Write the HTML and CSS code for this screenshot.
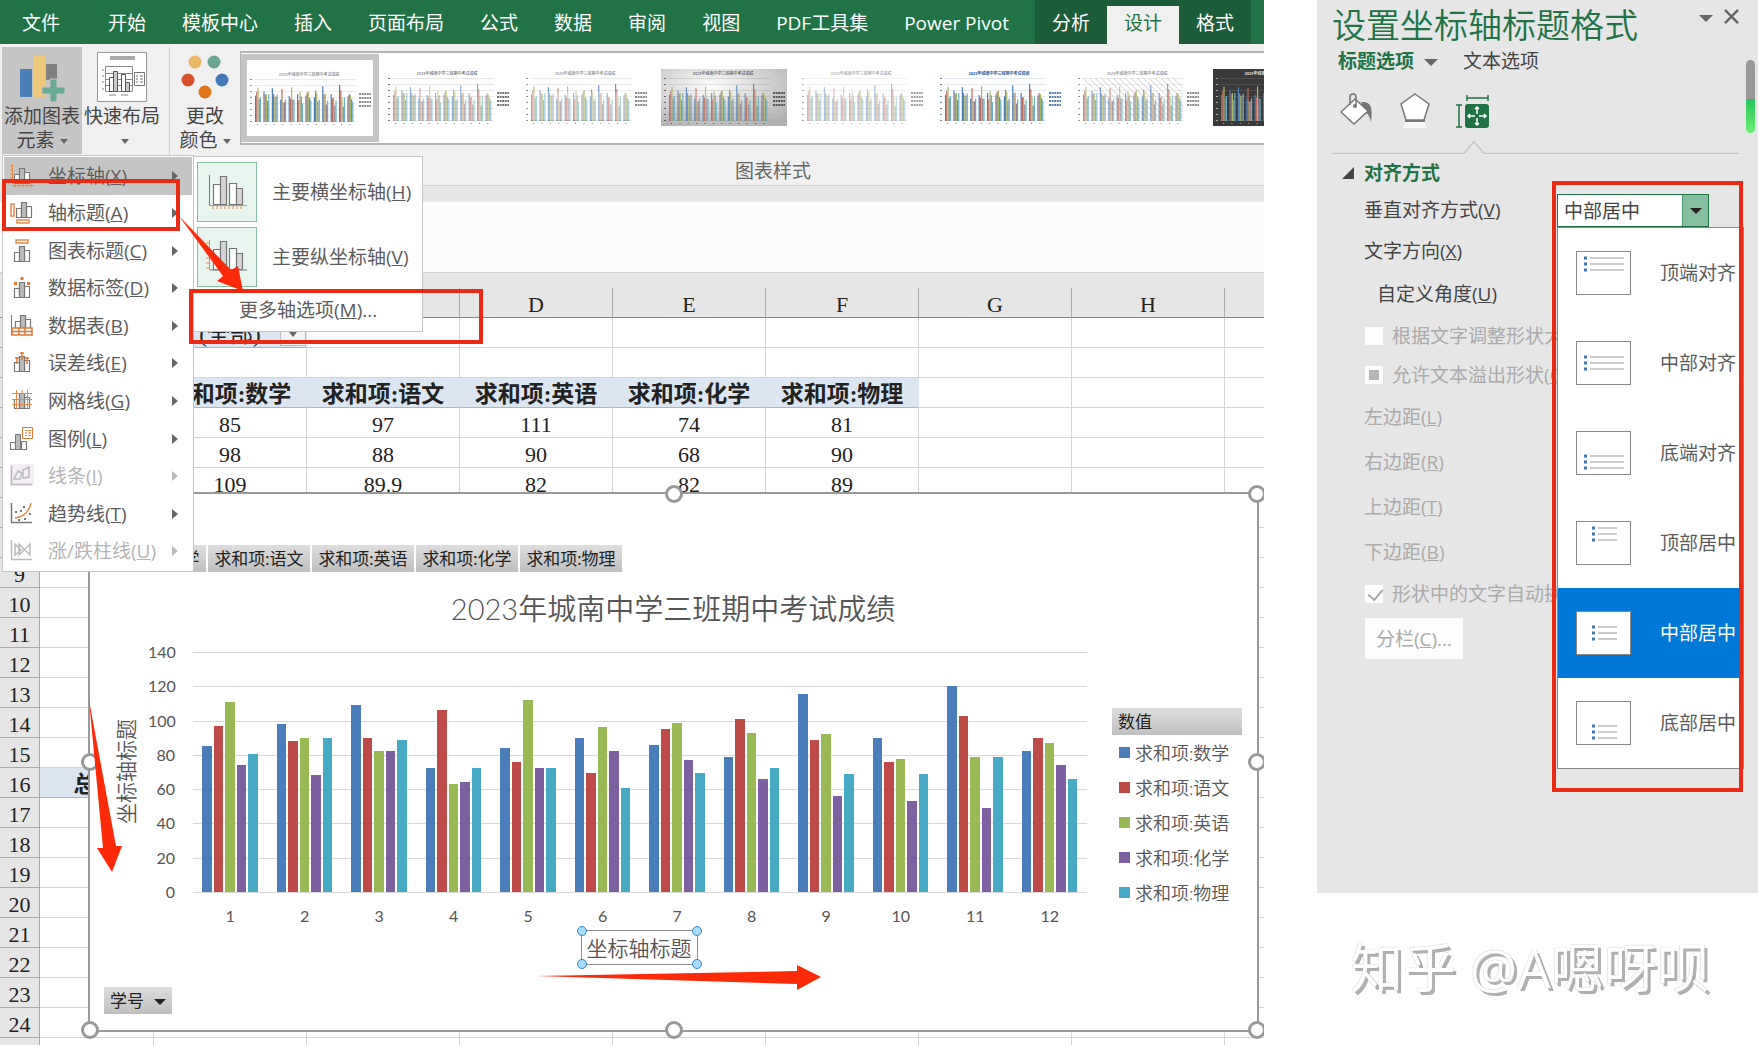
FILE: index.html
```
<!DOCTYPE html>
<html lang="zh-CN">
  <head>
    <meta charset="UTF-8" />
    <meta name="viewport" content="width=device-width, initial-scale=1.0" />
    <title>设置坐标轴标题格式</title>
    <link rel="stylesheet" href="styles.css">
  </head>
  <body>
    <!-- shared icon parts -->
    <svg class="defs">
      <symbol id="bars" viewBox="0 0 24 24">
        <g stroke="#777" stroke-width="1.2">
          <path fill="#fff" d="M4.5 10.5h5v9h-5zM14.5 8.5h5v11h-5z" />
          <path fill="#bbb" d="M9.500 4.500h5v15h-5z" />
        </g>
      </symbol>
      <symbol id="bigbars" viewBox="0 0 42 42">
        <g stroke="#777" stroke-width="1.200">
          <path fill="#fff" d="M7.500 13.500h7v20h-7zM23.500 12.500h7v21h-7z" />
          <path fill="#d5d5d5" d="M14.500 5.500h6v28h-6zM30.500 17.500h6v16h-6z" />
        </g>
      </symbol>
      <symbol id="lines-wide" viewBox="0 0 40 16">
        <path d="M6 2h34M6 8h34M6 14h34" stroke="#999" />
        <path d="M0 .5h3v3H0zM0 6.500h3v3H0zM0 12.500h3v3H0z" fill="#3f78b5" />
      </symbol>
      <symbol id="lines-short" viewBox="0 0 26 16">
        <path d="M7 2h19M7 8h19M7 14h19" stroke="#999" />
        <path d="M1 .5h3v3H1zM1 6.500h3v3H1zM1 12.500h3v3H1z" fill="#3f78b5" />
      </symbol>
    </svg>

    <main class="excel">
      <nav class="tabs">
        <button class="tab tab-file">文件</button>
        <button class="tab">开始</button>
        <button class="tab">模板中心</button>
        <button class="tab">插入</button>
        <button class="tab">页面布局</button>
        <button class="tab">公式</button>
        <button class="tab">数据</button>
        <button class="tab">审阅</button>
        <button class="tab">视图</button>
        <button class="tab">PDF工具集</button>
        <button class="tab">Power Pivot</button>
        <div class="context-tabs">
          <button class="tab">分析</button>
          <button class="tab active">设计</button>
          <button class="tab">格式</button>
        </div>
      </nav>

      <section class="ribbon">
        <button class="big-btn pressed">
          <svg class="big-icon" viewBox="0 0 50 50">
            <path fill="#4a7fb8" d="M3 17h12v28H3z" />
            <path fill="#f0c87c" d="M16 4h12v41H16z" />
            <path fill="#808080" d="M29 12h11v16H29z" />
            <path fill="#6aab94" stroke="#c5c5c5" d="M33 27h7v8h8v7h-8v8h-7v-8h-8v-7h8z" />
          </svg>
          <span>添加图表</span>
          <span>元素<i class="caret"></i></span>
        </button>
        <button class="big-btn">
          <svg class="big-icon" viewBox="0 0 50 50">
            <path fill="#fff" stroke="#999" d="M.5.5h49v49H.5z" />
            <path fill="#aaa" d="M13 4h25v4H13z" />
            <path fill="none" stroke="#888" d="M8.500 14.500h27v25h-27zM8 21.500h27M8 27.500h27M8 33.500h27M5 18h2M5 24h2M5 30h2M5 37h2M12 43h7M24 43h7" />
            <path fill="#fff" stroke="#555" d="M12.500 25.500h4v14h-4zM24.500 22.500h4v17h-4z" />
            <path fill="#ccc" stroke="#555" d="M16.500 19.500h4v20h-4zM28.500 30.500h4v9h-4z" />
            <path fill="#fff" stroke="#777" d="M37.500 20.500h10v13h-10z" />
            <path stroke="#777" d="M39 24h2M43 24h3M39 27h2M43 27h3M39 30h2M43 30h3" />
          </svg>
          <span>快速布局</span>
          <span><i class="caret"></i></span>
        </button>
        <button class="big-btn color-btn">
          <svg class="big-icon" viewBox="0 0 50 50">
            <circle cx="15" cy="10" r="6.500" fill="#e9b765" />
            <circle cx="34" cy="10" r="6.500" fill="#6aa68f" />
            <circle cx="8" cy="28" r="6.500" fill="#d8512f" />
            <circle cx="42" cy="28" r="6.500" fill="#4378b7" />
            <circle cx="25" cy="40" r="6.500" fill="#e0761b" />
          </svg>
          <span>更改</span>
          <span>颜色<i class="caret"></i></span>
        </button>
        <div class="styles-group">
          <div class="gallery" id="gallery"></div>
          <div class="group-label">图表样式</div>
        </div>
      </section>
      <div class="ribbon-edge"></div>
      <div class="formula-bar"></div>

      <section class="sheet">
        <div class="head-strip"></div>
        <table class="grid">
          <colgroup>
            <col class="col-num"><col class="col-a"><col><col><col><col><col><col><col><col>
          </colgroup>
          <thead>
            <tr><th></th><th>A</th><th>B</th><th>C</th><th>D</th><th>E</th><th>F</th><th>G</th><th>H</th><th></th></tr>
          </thead>
          <tbody id="rows">
            <tr><th>1</th><td></td><td class="pivot filter">(全部)<button class="filter-btn" aria-label="筛选"><i class="caret"></i></button></td><td></td><td></td><td></td><td></td><td></td><td></td><td></td></tr>
            <tr><th>2</th><td></td><td></td><td></td><td></td><td></td><td></td><td></td><td></td><td></td></tr>
            <tr><th>3</th><td class="pivot"></td><td class="pivot">求和项:数学</td><td class="pivot">求和项:语文</td><td class="pivot">求和项:英语</td><td class="pivot">求和项:化学</td><td class="pivot">求和项:物理</td><td></td><td></td><td></td></tr>
            <tr><th>4</th><td></td><td>85</td><td>97</td><td>111</td><td>74</td><td>81</td><td></td><td></td><td></td></tr>
            <tr><th>5</th><td></td><td>98</td><td>88</td><td>90</td><td>68</td><td>90</td><td></td><td></td><td></td></tr>
            <tr><th>6</th><td></td><td>109</td><td>89.9</td><td>82</td><td>82</td><td>89</td><td></td><td></td><td></td></tr>
          </tbody>
        </table>

        <div class="chart">
          <i class="handle top left"></i><i class="handle top mid"></i><i class="handle top right"></i>
          <i class="handle center left"></i><i class="handle center right"></i>
          <i class="handle bottom left"></i><i class="handle bottom mid"></i><i class="handle bottom right"></i>

          <div class="field-buttons">
            <button class="field-btn">求和项:数学</button>
            <button class="field-btn">求和项:语文</button>
            <button class="field-btn">求和项:英语</button>
            <button class="field-btn">求和项:化学</button>
            <button class="field-btn">求和项:物理</button>
          </div>
          <h2 class="chart-title">2023年城南中学三班期中考试成绩</h2>
          <div class="chart-body">
            <div class="y-title">坐标轴标题</div>
            <div class="y-axis">
              <span>140</span><span>120</span><span>100</span><span>80</span><span>60</span><span>40</span><span>20</span><span>0</span>
            </div>
            <div class="plot-col">
              <div class="plot" id="plot"></div>
              <div class="x-axis" id="x-axis"></div>
            </div>
            <div class="legend">
              <div class="legend-head">数值</div>
              <div class="legend-item"><i class="s0"></i>求和项:数学</div>
              <div class="legend-item"><i class="s1"></i>求和项:语文</div>
              <div class="legend-item"><i class="s2"></i>求和项:英语</div>
              <div class="legend-item"><i class="s3"></i>求和项:化学</div>
              <div class="legend-item"><i class="s4"></i>求和项:物理</div>
            </div>
          </div>
          <div class="x-title">坐标轴标题<i class="dot tl"></i><i class="dot tr"></i><i class="dot bl"></i><i class="dot br"></i></div>
          <button class="field-btn axis-btn">学号<i class="caret dark"></i></button>
        </div>
      </section>

      <!-- add chart element menu -->
      <div class="menu">
        <button class="menu-item hover">
          <svg viewBox="0 0 24 24"><use href="#bars" /><path fill="none" stroke="#e58a4a" d="M2.500 0v20M0 2h3M0 6h3M0 10h3M0 14h3M0 18h3M2 21.500h22M5 20v4M9 20v4M13 20v4M17 20v4M21 20v4" /></svg>
          <span>坐标轴(<u>X</u>)</span><i class="arrow"></i>
        </button>
        <button class="menu-item">
          <svg viewBox="0 0 24 24"><use href="#bars" x="2" y="-3" /><path fill="#fff" stroke="#e58a4a" stroke-width="1.500" d="M1 3h3v12H1zM7 19h12v3H7z" /></svg>
          <span>轴标题(<u>A</u>)</span><i class="arrow"></i>
        </button>
        <button class="menu-item">
          <svg viewBox="0 0 24 24"><use href="#bars" y="3" /><path fill="#fff" stroke="#e58a4a" stroke-width="1.500" d="M6 1h12v3H6z" /></svg>
          <span>图表标题(<u>C</u>)</span><i class="arrow"></i>
        </button>
        <button class="menu-item">
          <svg viewBox="0 0 24 24"><use href="#bars" y="2" /><path fill="#e07a35" d="M10.500 1h3v3h-3zM4 6h3v3H4zM17 6h3v3h-3z" /></svg>
          <span>数据标签(<u>D</u>)</span><i class="arrow"></i>
        </button>
        <button class="menu-item">
          <svg viewBox="0 0 24 24"><use href="#bars" y="-3" x="1" /><path fill="none" stroke="#777" d="M1.500 1v20" /><path fill="#fff" stroke="#e07a35" stroke-width="1.500" d="M2 14h20v7H2zM2 17.500h20M9 14v7M15 14v7" /></svg>
          <span>数据表(<u>B</u>)</span><i class="arrow"></i>
        </button>
        <button class="menu-item">
          <svg viewBox="0 0 24 24"><use href="#bars" y="1" /><path stroke="#e07a35" stroke-width="1.500" d="M12 1v8M10 2h4M7 6v7M5 7h4M17 6v7M15 7h4" /></svg>
          <span>误差线(<u>E</u>)</span><i class="arrow"></i>
        </button>
        <button class="menu-item">
          <svg viewBox="0 0 24 24"><use href="#bars" /><path stroke="#e58a4a" d="M2 4.500h20M2 10.500h20M2 15.500h20M6.500 1v19M12 1v4M17.500 1v19" /></svg>
          <span>网格线(<u>G</u>)</span><i class="arrow"></i>
        </button>
        <button class="menu-item">
          <svg viewBox="0 0 24 24"><path fill="#fff" stroke="#777" stroke-width="1.200" d="M.5 15.500h5v7h-5zM11.500 14.500h5v8h-5z" /><path fill="#bbb" stroke="#777" d="M5.500 7.500h5v15h-5z" /><path fill="#fff" stroke="#e07a35" d="M12.500.5h10v11h-10z" /><path stroke="#e07a35" d="M15 3.500h2M18 3.500h3M15 6h2M18 6h3M15 8.500h2M18 8.500h3" /></svg>
          <span>图例(<u>L</u>)</span><i class="arrow"></i>
        </button>
        <button class="menu-item disabled" disabled>
          <svg viewBox="0 0 24 24"><path fill="#f4eef6" d="M0 0h24v22H0z" /><path fill="none" stroke="#bbb" stroke-width="1.500" d="M1.500 2v18.500H22M4 15l4-8 4 2-2 6zM13 6l6-3v10l-6 1z" /></svg>
          <span>线条(<u>I</u>)</span><i class="arrow"></i>
        </button>
        <button class="menu-item">
          <svg viewBox="0 0 24 24"><path fill="none" stroke="#777" stroke-width="1.500" d="M1.500 1v19.500H22" /><path fill="none" stroke="#e58a4a" stroke-width="1.500" d="M5 16C13 15 19 10 21 1" /><path fill="#777" d="M5 9h2v2H5zM10 8h2v2h-2zM13 4h2v2h-2zM14 16h2v2h-2zM19 11h2v2h-2zM8 17h2v2H8z" /></svg>
          <span>趋势线(<u>T</u>)</span><i class="arrow"></i>
        </button>
        <button class="menu-item disabled" disabled>
          <svg viewBox="0 0 24 24"><path fill="none" stroke="#bbb" stroke-width="1.500" d="M1.500 1v19.500H22M5 5v11l6-5zM20 5v11L9 5v11z" /></svg>
          <span>涨/跌柱线(<u>U</u>)</span><i class="arrow"></i>
        </button>
      </div>

      <div class="submenu">
        <button class="sub-item">
          <span class="tile"><svg viewBox="0 0 42 42"><use href="#bigbars" /><path d="M3.500 4v30" stroke="#777" /><path d="M3 34.500h38M7 34v4M11 34v4M15 34v4M19 34v4M23 34v4M27 34v4M31 34v4M35 34v4" stroke="#e58a4a" /></svg></span>
          <span>主要横坐标轴(<u>H</u>)</span>
        </button>
        <button class="sub-item">
          <span class="tile"><svg viewBox="0 0 42 42"><use href="#bigbars" /><path d="M3.500 4v30M0 7h4M0 12h4M0 17h4M0 22h4M0 27h4M0 32h4" stroke="#e58a4a" /><path d="M4 34h37" stroke="#777" /></svg></span>
          <span>主要纵坐标轴(<u>V</u>)</span>
        </button>
        <button class="sub-item more"><span>更多轴选项(<u>M</u>)...</span></button>
      </div>

      <div class="mark mark-titles"></div>
      <div class="mark mark-more"></div>
      <svg class="mark-arrows" viewBox="0 0 1264 1045">
        <path d="M179 216L231 270L238 266L243 291L217 281L223 276Z" />
        <path d="M89 700L116 846L122 846L112 872L97 848L103 848Z" />
        <path d="M537 976L797 971V965L821 977L797 990V984Z" />
      </svg>
    </main>

    <div class="side">
      <aside class="pane">
        <header class="pane-head">
          <h1>设置坐标轴标题格式</h1>
          <button class="icon-btn" aria-label="选项"><i class="caret wide"></i></button>
          <button class="icon-btn" aria-label="关闭"><svg viewBox="0 0 16 16"><path d="M1 1l14 14M15 1L1 15" stroke="#666" stroke-width="2.500" /></svg></button>
        </header>
        <div class="pane-tabs">
          <button class="on">标题选项<i class="caret wide"></i></button>
          <button>文本选项</button>
        </div>
        <div class="pane-icons">
          <button aria-label="填充与线条">
            <svg viewBox="0 0 36 36"><path fill="#777" d="M21 9c10-1 12 5 10 20-2-8-4-9-6-9z" /><path fill="#fff" stroke="#777" stroke-width="1.500" d="M15 6l13 12-14 13L1 19z" /><path fill="none" stroke="#777" stroke-width="1.500" d="M10 12V4c0-4 6-4 6 0v8" /><circle cx="15" cy="13" r="2" fill="#777" /></svg>
          </button>
          <button aria-label="效果">
            <svg viewBox="0 0 36 36"><path fill="#f6f6f6" d="M9 28h18l3 7H6z" /><path fill="#fff" stroke="#777" stroke-width="1.500" d="M18 1l14 10-5 16H9L4 11z" /><path stroke="#777" stroke-width="2" d="M8 28h20" /></svg>
          </button>
          <button aria-label="大小与属性">
            <svg viewBox="0 0 36 36"><rect x="11" y="11" width="24" height="24" rx="3" fill="#217346" /><path fill="none" stroke="#217346" stroke-width="1.500" d="M13 5h21M13 2v6M34 2v6M5 12v22M2 12h6M2 34h6" /><path fill="none" stroke="#fff" stroke-width="1.500" d="M14 23h7M25 23h7M23 14v7M23 25v7M21 16l2-2 2 2M21 30l2 2 2-2M16 21l-2 2 2 2M30 21l2 2-2 2" /></svg>
          </button>
        </div>
        <svg class="notch" viewBox="0 0 407 14"><path d="M0 13.500H132L142 1.500L152 13.500H407" fill="none" stroke="#c6c6c6" stroke-width="1.500" /></svg>

        <h3 class="section"><svg viewBox="0 0 12 12"><path d="M12 0v12H0z" fill="#444" /></svg>对齐方式</h3>
        <div class="form">
          <div class="field"><label for="valign">垂直对齐方式(<u>V</u>)</label>
            <div class="combo">
              <select id="valign"><option>中部居中</option></select>
              <span class="combo-arrow"><i class="caret black"></i></span>
            </div>
          </div>
          <div class="field">文字方向(<u>X</u>)</div>
          <div class="field tall indent">自定义角度(<u>U</u>)</div>
          <label class="check"><input type="checkbox" disabled>根据文字调整形状大小</label>
          <label class="check"><input type="checkbox" class="mixed" disabled>允许文本溢出形状(<u>O</u>)</label>
          <div class="field tall off">左边距(<u>L</u>)</div>
          <div class="field tall off">右边距(<u>R</u>)</div>
          <div class="field tall off">上边距(<u>T</u>)</div>
          <div class="field tall off">下边距(<u>B</u>)</div>
          <label class="check"><input type="checkbox" checked disabled>形状中的文字自动换行</label>
          <button class="columns" disabled>分栏(<u>C</u>)...</button>
        </div>
        <div class="scroll"></div>

        <div class="options" role="listbox">
          <button class="option at-top"><span class="box"><svg class="wide"><use href="#lines-wide" /></svg></span>顶端对齐</button>
          <button class="option"><span class="box"><svg class="wide"><use href="#lines-wide" /></svg></span>中部对齐</button>
          <button class="option at-bottom"><span class="box"><svg class="wide"><use href="#lines-wide" /></svg></span>底端对齐</button>
          <button class="option at-top"><span class="box"><svg class="short"><use href="#lines-short" /></svg></span>顶部居中</button>
          <button class="option chosen"><span class="box"><svg class="short"><use href="#lines-short" /></svg></span>中部居中</button>
          <button class="option at-bottom"><span class="box"><svg class="short"><use href="#lines-short" /></svg></span>底部居中</button>
        </div>
        <div class="mark mark-options"></div>
      </aside>
      <p class="watermark">知乎 @A嗯呀呗</p>
    </div>
    <script src="script.js"></script>
  </body>
</html>
```
FILE: styles.css
```
* {
  box-sizing: border-box;
}

body {
  margin: 0;
  height: 100vh;
  display: flex;
  overflow: hidden;
  background: #fff;
  color: #444;
  font-family: "Open Sans", "Noto Sans CJK SC", sans-serif;
  font-size: 19px;
  line-height: 24px;
}

button {
  margin: 0;
  padding: 0;
  border: 0;
  background: none;
  color: inherit;
  font: inherit;
  white-space: nowrap;
}

.defs {
  display: none;
}

.caret {
  display: inline-block;
  margin-left: 5px;
  border: 4px solid transparent;
  border-top: 5px solid #666;
  border-bottom: 0;
  vertical-align: middle;
}

.caret.wide {
  border-width: 7px 7px 0;
}

.caret.dark,
.caret.black {
  border-width: 6px 6px 0;
  border-top-color: #222;
}

/* ---------- excel window ---------- */

.excel {
  position: relative;
  flex: 1;
  min-width: 0;
  display: flex;
  flex-direction: column;
  overflow: hidden;
}

.tabs {
  display: flex;
  height: 44px;
  flex: none;
  background: #217346;
  color: #fff;
}

.tab {
  flex: none;
  padding: 2px 18px 0;
}

.tab-file {
  padding: 2px 30px 0 22px;
}

.context-tabs {
  display: flex;
  margin-left: auto;
  margin-right: 13px;
  background: #1c5c38;
}

.context-tabs .tab {
  padding: 2px 17px 0;
}

.context-tabs .active {
  margin-top: 6px;
  padding: 0 17px 4px;
  background: #f0f0f0;
  color: #217346;
}

.ribbon {
  display: flex;
  flex: none;
  height: 142px;
  padding: 3px 0 0 2px;
  background: #f0f0f0;
  border-bottom: 1px solid #d5d5d5;
}

.big-btn {
  display: flex;
  flex-direction: column;
  align-items: center;
  width: 80px;
  height: 107px;
  padding-top: 5px;
}

.big-btn.pressed {
  background: #c5c5c5;
}

.big-btn .big-icon {
  width: 50px;
  height: 50px;
  margin-bottom: 2px;
}

.big-btn span {
  min-height: 24px;
}

.color-btn {
  width: 71px;
  height: 138px;
  margin-left: 7px;
  border-left: 1px solid #d0d0d0;
}

.styles-group {
  flex: 1;
  min-width: 0;
  padding-top: 4px;
  overflow: hidden;
}

.gallery {
  display: flex;
  height: 94px;
  overflow: hidden;
  background: #fff;
  border: solid #b4b4b4;
  border-width: 2px 0 2px 1px;
}

.thumb {
  flex: none;
  width: 138px;
  height: 88px;
  padding: 0 6px;
}

.thumb.selected {
  margin-top: 1px;
  padding: 0;
  border: 6px solid #c5c5c5;
}

.thumb svg {
  display: block;
  width: 126px;
  height: 57px;
  margin: auto;
}

.group-label {
  padding: 14px 0 0 42px;
  text-align: center;
  color: #666;
}

.ribbon-edge {
  flex: none;
  height: 16px;
  background: #e6e6e6;
}

.formula-bar {
  flex: none;
  height: 71px;
  background: #fcfcfc;
  border-bottom: 1px solid #d0d0d0;
}

/* ---------- sheet ---------- */

.sheet {
  position: relative;
  flex: 1;
  min-height: 0;
  overflow: hidden;
}

.head-strip {
  height: 15px;
  background: #e6e6e6;
}

.grid {
  table-layout: fixed;
  width: 1378px;
  border-spacing: 0;
  color: #222;
  font-family: "Liberation Serif", "Noto Sans CJK SC", serif;
  font-size: 22px;
}

.grid col {
  width: 153px;
}

.grid .col-num {
  width: 40px;
}

.grid .col-a {
  width: 114px;
}

.grid th,
.grid td {
  height: 30px;
  padding: 4px 0 0;
  border-right: 1px solid #d4d4d4;
  border-bottom: 1px solid #d4d4d4;
  line-height: 24px;
  text-align: center;
  white-space: nowrap;
}

.grid th {
  background: #e6e6e6;
  border-color: #aaa;
  font-weight: 400;
}

.grid thead th {
  border-bottom-color: #888;
}

.grid .pivot {
  background: #dce6f1;
  border-right-color: #dce6f1;
  border-bottom-color: #9db9da;
  font-weight: 700;
  font-size: 23px;
}

.grid .filter {
  position: relative;
  font-weight: 400;
}

.filter-btn {
  position: absolute;
  top: 1px;
  right: 0;
  width: 26px;
  height: 27px;
  background: #f4f4f4;
  border: 1px solid #bbb;
  line-height: 16px;
}

.filter-btn .caret {
  margin: 0;
}

/* ---------- chart ---------- */

.chart {
  position: absolute;
  top: 219px;
  left: 88px;
  right: 5px;
  height: 540px;
  display: flex;
  flex-direction: column;
  padding: 51px 15px 0 14px;
  background: #fff;
  border: 2px solid #9a9a9a;
  color: #555;
  font-family: Lato, "Noto Sans CJK SC", sans-serif;
}

.handle {
  position: absolute;
  width: 18px;
  height: 18px;
  margin: -9px;
  background: #fff;
  border: 3px solid #999;
  border-radius: 50%;
}

.handle.top { top: 0; }
.handle.center { top: 50%; }
.handle.bottom { top: 100%; }
.handle.left { left: 0; }
.handle.mid { left: 50%; }
.handle.right { left: 100%; }

.field-buttons {
  display: flex;
  gap: 2px;
}

.field-btn {
  width: 102px;
  height: 27px;
  background: linear-gradient(#dedede, #bfbfbf);
  color: #222;
  font-size: 17px;
}

.chart-title {
  margin: 19px 0 0;
  font-size: 29px;
  font-weight: 350;
  line-height: 36px;
  text-align: center;
}

.chart-body {
  display: flex;
  margin-top: 25px;
}

.y-title {
  width: 44px;
  height: 240px;
  text-align: center;
  font-size: 21px;
  font-weight: 350;
  line-height: 44px;
  writing-mode: vertical-rl;
  text-orientation: sideways;
  transform: rotate(180deg);
}

.y-axis {
  display: flex;
  flex-direction: column;
  justify-content: space-between;
  width: 27px;
  height: 260px;
  margin: -10px 18px 0 0;
  font-size: 16px;
  line-height: 20px;
  text-align: right;
}

.plot-col {
  flex: 1;
}

.plot {
  display: flex;
  height: 241px;
  border-bottom: 1px solid #d9d9d9;
  /* one grid line every 20 units */
  background: repeating-linear-gradient(#d9d9d9 0 1px, transparent 1px calc(240px / 7));
}

.group {
  flex: 1;
  display: flex;
  align-items: flex-end;
  gap: 2px;
  padding: 0 10px 0 9px;
}

.bar {
  flex: 1;
}

.s0 { background: #4a7ebb; }
.s1 { background: #be4b48; }
.s2 { background: #98b954; }
.s3 { background: #7d60a0; }
.s4 { background: #46aac5; }

.x-axis {
  display: flex;
  margin-top: 13px;
  font-size: 16px;
  line-height: 20px;
}

.x-axis span {
  flex: 1;
  text-align: center;
}

.legend {
  width: 130px;
  margin: 56px 0 0 25px;
}

.legend-head {
  height: 27px;
  padding-left: 6px;
  background: linear-gradient(#dedede, #bfbfbf);
  color: #222;
  font-size: 17px;
  line-height: 28px;
}

.legend-item {
  display: flex;
  align-items: center;
  gap: 5px;
  height: 35px;
  padding-left: 7px;
  font-size: 18px;
  font-weight: 350;
  white-space: nowrap;
}

.legend-item i {
  width: 11px;
  height: 11px;
}

.x-title {
  position: relative;
  align-self: center;
  width: 117px;
  margin: 4px 68px 0 0;
  border: 1px solid #8c8c8c;
  font-size: 21px;
  font-weight: 350;
  line-height: 33px;
  text-align: center;
}

.dot {
  position: absolute;
  width: 10px;
  height: 10px;
  margin: -5px;
  background: #a8dcff;
  border: 1px solid #2f86c9;
  border-radius: 50%;
}

.dot.tl { top: 0; left: 0; }
.dot.tr { top: 0; left: 100%; }
.dot.bl { top: 100%; left: 0; }
.dot.br { top: 100%; left: 100%; }

.axis-btn {
  width: 68px;
  margin-top: 22px;
}

.axis-btn .caret {
  margin-left: 10px;
}

/* ---------- menus ---------- */

.menu {
  position: absolute;
  top: 155px;
  left: 2px;
  width: 192px;
  height: 417px;
  display: grid;
  grid-auto-rows: 1fr;
  padding: 1px;
  background: #fff;
  border: 1px solid #c6c6c6;
  color: #5c5c5c;
}

.menu-item {
  display: flex;
  align-items: center;
  padding: 0 14px 0 6px;
}

.menu-item.hover {
  background: #c5c5c5;
}

.menu-item.disabled {
  color: #b5b5b5;
}

.menu-item svg {
  width: 24px;
  height: 24px;
  margin-right: 14px;
}

.menu-item svg use {
  width: 24px;
  height: 24px;
}

.arrow {
  margin-left: auto;
  border: 5px solid transparent;
  border-left: 6px solid #666;
  border-right: 0;
}

.disabled .arrow {
  border-left-color: #bbb;
}

.submenu {
  position: absolute;
  top: 156px;
  left: 193px;
  width: 230px;
  padding: 5px 3px 3px;
  background: #fff;
  border: 1px solid #c6c6c6;
  color: #5c5c5c;
}

.sub-item {
  display: flex;
  align-items: center;
  gap: 15px;
  height: 60px;
  margin-bottom: 5px;
}

.sub-item.more {
  height: 36px;
  margin: 0;
  padding-left: 42px;
}

.tile {
  width: 60px;
  height: 60px;
  padding: 8px;
  background: #e7f5ee;
  border: 1px solid #86bfa0;
}

.tile svg {
  display: block;
  width: 42px;
  height: 42px;
}

/* ---------- red marks ---------- */

.mark {
  position: absolute;
  border: 4px solid #ea2a12;
  pointer-events: none;
}

.mark-titles {
  top: 179px;
  left: 2px;
  width: 178px;
  height: 52px;
}

.mark-more {
  top: 289px;
  left: 189px;
  width: 294px;
  height: 55px;
}

.mark-options {
  top: 181px;
  left: 235px;
  width: 191px;
  height: 611px;
}

.mark-arrows {
  position: absolute;
  top: 0;
  left: 0;
  width: 1264px;
  height: 1045px;
  fill: #fb2a08;
  pointer-events: none;
}

/* ---------- format pane ---------- */

.side {
  flex: none;
  width: 441px;
  margin-left: 53px;
}

.pane {
  position: relative;
  height: 893px;
  padding: 5px 19px 0 15px;
  background: #e6e6e6;
}

.pane-head {
  display: flex;
  align-items: flex-start;
}

.pane-head h1 {
  flex: 1;
  margin: 0;
  color: #217346;
  font-size: 34px;
  font-weight: 350;
  line-height: 40px;
}

.icon-btn {
  margin-left: 11px;
}

.icon-btn .caret {
  margin: 0;
}

.icon-btn svg {
  width: 15px;
  height: 15px;
}

.pane-tabs {
  display: flex;
  gap: 25px;
  margin-top: 4px;
  padding-left: 6px;
}

.pane-tabs .on {
  color: #217346;
  font-weight: 700;
}

.pane-tabs .caret {
  margin-left: 10px;
}

.pane-icons {
  display: flex;
  gap: 21px;
  margin-top: 20px;
  padding-left: 8px;
}

.pane-icons button,
.pane-icons svg {
  display: block;
  width: 36px;
  height: 36px;
}

.notch {
  display: block;
  width: 407px;
  height: 14px;
  margin-top: 11px;
}

.section {
  display: flex;
  align-items: center;
  gap: 10px;
  margin: 7px 0 0;
  padding-left: 10px;
  color: #217346;
  font-size: 19px;
}

.section svg {
  width: 12px;
  height: 12px;
}

.form {
  padding: 4px 0 0 32px;
}

.field {
  position: relative;
  display: flex;
  align-items: center;
  height: 41px;
  white-space: pre;
}

.field.tall {
  height: 45px;
}

.indent {
  padding-left: 13px;
}

.off,
.check,
.columns {
  color: #ababab;
}

.check {
  display: flex;
  align-items: center;
  width: 193px;
  height: 39px;
  overflow: hidden;
  white-space: nowrap;
}

.check input {
  appearance: none;
  flex: none;
  width: 18px;
  height: 18px;
  margin: 0 9px 0 1px;
  background: #fdfdfd;
}

.check .mixed {
  border: 4px solid #fdfdfd;
  background: #b5b5b5;
}

.check input:checked::after {
  content: "";
  display: block;
  width: 7px;
  height: 12px;
  margin: 1px 0 0 6px;
  border: solid #aaa;
  border-width: 0 2px 2px 0;
  transform: rotate(40deg);
}

.columns {
  display: block;
  width: 98px;
  height: 41px;
  margin: 5px 0 0 1px;
  background: #fdfdfd;
}

.combo {
  position: absolute;
  left: 193px;
  top: 5px;
  display: flex;
  width: 152px;
  height: 33px;
  border: 1px solid #217346;
}

.combo select {
  appearance: none;
  flex: 1;
  min-width: 0;
  padding: 0 6px;
  border: 0;
  border-radius: 0;
  background: #fff;
  color: #444;
  font: inherit;
}

.combo-arrow {
  display: flex;
  align-items: center;
  justify-content: center;
  width: 26px;
  background: #86bfa0;
  border-left: 1px solid #4f9a72;
}

.combo .caret {
  margin: 0;
}

.scroll {
  position: absolute;
  top: 60px;
  right: 3px;
  width: 9px;
  height: 73px;
  border-radius: 5px;
  background: linear-gradient(#999 0 39px, #26c45c 39px, #6fee72);
}

.options {
  position: absolute;
  top: 227px;
  left: 240px;
  width: 187px;
  padding-right: 4px;
  background: #fff;
  border: 1px solid #888;
}

.option {
  display: flex;
  align-items: center;
  width: 100%;
  height: 90px;
  padding-left: 18px;
  color: #5c5c5c;
}

.option .box {
  display: flex;
  align-items: center;
  justify-content: center;
  width: 55px;
  height: 44px;
  margin-right: 29px;
  padding: 4px 5px;
  background: #fff;
  border: 1px solid #888;
}

.at-top .box {
  align-items: flex-start;
}

.at-bottom .box {
  align-items: flex-end;
}

.box svg {
  height: 16px;
}

.box .wide {
  width: 40px;
}

.box .short {
  width: 26px;
}

.option.chosen {
  background: #0078d7;
  color: #fff;
}

.watermark {
  margin: 39px 0 0 33px;
  color: #fff;
  font-size: 53px;
  line-height: 72px;
  white-space: nowrap;
  text-shadow: 0 0 1px #999, 3px 3px 0 #b0b0b0;
}
```
FILE: script.js
```
const scores = [
  [85, 97, 111, 74, 80.5],
  [98, 88, 90, 68, 90],
  [109, 90, 82, 82, 88.5],
  [72.5, 106, 63, 64, 72.5],
  [84, 76, 112, 72.5, 72.5],
  [90, 69.5, 96, 82.5, 60.5],
  [85.5, 95, 98.5, 77, 69.5],
  [79, 101, 93, 66, 72.5],
  [115.5, 88.5, 92, 56, 69],
  [90, 76, 77.5, 53, 69],
  [120, 102.5, 79, 49, 79],
  [82.5, 90, 87, 74, 66],
];

// clustered columns + category labels
scores.forEach((row, i) => {
  const bars = row
    .map((v, s) => `<div class="bar s${s}" style="height:${(v / 140) * 100}%"></div>`)
    .join("");
  document.getElementById("plot").innerHTML += `<div class="group">${bars}</div>`;
  document.getElementById("x-axis").innerHTML += `<span>${i + 1}</span>`;
});

// remaining sheet rows, the grand total sits in row 16
let rows = "";
for (let n = 7; n <= 25; n++) {
  const first = n === 16 ? '<td class="pivot">总计</td>' : "<td></td>";
  rows += `<tr><th>${n}</th>${first}${"<td></td>".repeat(8)}</tr>`;
}
document.getElementById("rows").insertAdjacentHTML("beforeend", rows);

// chart style gallery
const palette = ["#4a7ebb", "#be6b58", "#a8b964", "#8d8090", "#66b0c9"];
const styles = [
  { bg: "#fff", ink: "#666", opacity: 1 },
  { bg: "#fff", ink: "#444", opacity: 0.6 },
  { bg: "#fff", ink: "#666", opacity: 0.8, stripes: "h" },
  { bg: "url(#silver)", ink: "#333", opacity: 0.8 },
  { bg: "#fff", ink: "#888", opacity: 0.45 },
  { bg: "#fff", ink: "#2a5a94", opacity: 1, strong: true },
  { bg: "#fff", ink: "#666", opacity: 0.7, stripes: "d" },
  { bg: "#3a3a3a", ink: "#ddd", opacity: 1, strong: true },
];

function thumb(s, i) {
  let out = `<rect width="126" height="57" fill="${s.bg}"/>`;
  for (let y = 9; y < 52; y += 6) {
    out += `<path d="M7 ${y}.5h102" stroke="${s.ink}" opacity=".12"/><path d="M3 ${y}.5h2" stroke="${s.ink}" opacity=".7"/>`;
  }
  if (s.stripes === "d") {
    for (let x = 8; x < 104; x += 6) {
      out += `<path d="M${x} 9l${Math.min(42, 108 - x)} ${Math.min(42, 108 - x)}" stroke="#bbb" stroke-width=".6"/>`;
    }
  }
  scores.forEach((row, g) => {
    row.forEach((v, k) => {
      const h = v * 0.31;
      out += `<rect x="${8 + g * 8.4 + k * 1.2}" y="${52 - h}" width="1.2" height="${h}" fill="${palette[k]}" opacity="${s.opacity}"/>`;
    });
    out += `<path d="M${10 + g * 8.4} 54.500h1" stroke="${s.ink}" opacity=".7"/>`;
  });
  if (s.stripes === "h") {
    for (let y = 24; y < 52; y += 2) {
      out += `<path d="M8 ${y}h100" stroke="#fff" stroke-width=".6"/>`;
    }
  }
  for (let y = 24; y < 40; y += 4) {
    out += `<path d="M112 ${y}h12" stroke="${s.ink}" stroke-width="1.500" stroke-dasharray="2 .6"/>`;
  }
  out += `<text x="62" y="6" text-anchor="middle" font-size="4" font-weight="${s.strong ? 700 : 400}" fill="${s.ink}">2023年城南中学三班期中考试成绩</text>`;
  const defs = i === 3
    ? '<defs><radialGradient id="silver" cx=".4" cy=".3" r=".8"><stop offset="0" stop-color="#fff"/><stop offset="1" stop-color="#b0b0b0"/></radialGradient></defs>'
    : "";
  return `<button class="thumb${i === 0 ? " selected" : ""}" aria-label="样式 ${i + 1}"><svg viewBox="0 0 126 57">${defs}${out}</svg></button>`;
}

document.getElementById("gallery").innerHTML = styles.map(thumb).join("");
```
